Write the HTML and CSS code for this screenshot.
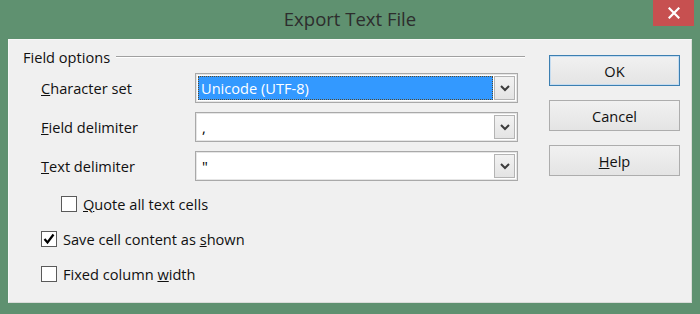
FILE: index.html
```html
<!DOCTYPE html>
<html>
<head>
<meta charset="utf-8">
<link rel="stylesheet" href="styles.css">
</head>
<body>
<div class="window">
  <div class="titlebar">
    <div class="tb-spacer"></div>
    <div class="title">Export Text File</div>
    <div class="tb-controls">
      <div class="close">
        <svg width="12" height="12" viewBox="0 0 12 12"><path d="M1.5 1.5 L10.5 10.5 M10.5 1.5 L1.5 10.5" stroke="#fff" stroke-width="2.2" stroke-linecap="square"/></svg>
      </div>
    </div>
  </div>
  <div class="client">
    <div class="left">
      <div class="section-head">
        <span>Field options</span>
        <div class="rule"></div>
      </div>
      <div class="rows">
        <div class="row">
          <label class="lbl"><u>C</u>haracter set</label>
          <div class="combo">
            <div class="field"><span class="selected">Unicode (UTF-8)</span></div>
            <div class="drop"><svg width="10" height="7" viewBox="0 0 10 7"><polyline points="1,1 5,5 9,1" fill="none" stroke="#3c3c3c" stroke-width="2"/></svg></div>
          </div>
        </div>
        <div class="row">
          <label class="lbl"><u>F</u>ield delimiter</label>
          <div class="combo">
            <div class="field"><span class="val">,</span></div>
            <div class="drop"><svg width="10" height="7" viewBox="0 0 10 7"><polyline points="1,1 5,5 9,1" fill="none" stroke="#3c3c3c" stroke-width="2"/></svg></div>
          </div>
        </div>
        <div class="row">
          <label class="lbl"><u>T</u>ext delimiter</label>
          <div class="combo">
            <div class="field"><span class="val">"</span></div>
            <div class="drop"><svg width="10" height="7" viewBox="0 0 10 7"><polyline points="1,1 5,5 9,1" fill="none" stroke="#3c3c3c" stroke-width="2"/></svg></div>
          </div>
        </div>
      </div>
      <div class="checks">
        <div class="check indent"><span class="box"></span><span><u>Q</u>uote all text cells</span></div>
        <div class="check"><span class="box"><svg width="14" height="14" viewBox="0 0 14 14"><path d="M2.5 7 L5.5 10.5 L11.5 2.5" fill="none" stroke="#000" stroke-width="2.2"/></svg></span><span>Save cell content as <u>s</u>hown</span></div>
        <div class="check"><span class="box"></span><span>Fixed column <u>w</u>idth</span></div>
      </div>
    </div>
    <div class="right">
      <div class="btn default">OK</div>
      <div class="btn">Cancel</div>
      <div class="btn"><span><u>H</u>elp</span></div>
    </div>
  </div>
</div>
</body>
</html>
```
FILE: styles.css
```css
html, body {
  margin: 0;
  padding: 0;
}
body {
  width: 700px;
  height: 314px;
  background: #5f9170;
  font-family: "Open Sans", "Noto Sans", "Liberation Sans", sans-serif;
  font-size: 14.6px;
  color: #000;
  overflow: hidden;
}
.window {
  display: flex;
  flex-direction: column;
}
.titlebar {
  height: 39px;
  display: grid;
  grid-template-columns: 1fr auto 1fr;
}
.title {
  font-size: 18.5px;
  color: #2d2d2d;
  line-height: 39px;
  margin-top: -1px;
}
.tb-controls {
  display: flex;
  justify-content: flex-end;
  align-items: flex-start;
  padding-right: 6px;
}
.close {
  width: 41px;
  height: 26px;
  background: #c75050;
  display: flex;
  align-items: center;
  justify-content: center;
}
.client {
  margin: 0 8px;
  height: 264px;
  box-sizing: border-box;
  background: #f0f0f0;
  border-top: 1px solid #f7f7f7;
  border-left: 1px solid #f7f7f7;
  border-right: 1px solid #d9dcd9;
  border-bottom: 1px solid #d9dcd9;
  display: flex;
  padding: 0 11px 0 14px;
  gap: 24px;
}
.left {
  width: 502px;
  padding-top: 7px;
}
.section-head {
  height: 20px;
  display: flex;
  align-items: center;
  color: #111;
}
.section-head .rule {
  flex: 1;
  margin-left: 6px;
  height: 0;
  border-top: 1px solid #a0a0a0;
  border-bottom: 1px solid #ffffff;
}
.rows {
  margin-top: 6px;
  display: flex;
  flex-direction: column;
  gap: 9px;
}
.row {
  display: flex;
  align-items: center;
  padding-left: 18px;
  height: 30px;
}
.lbl {
  width: 154px;
  color: #111;
}
.combo {
  width: 323px;
  height: 30px;
  box-sizing: border-box;
  border: 1px solid #a9a9a9;
  background: #fff;
  display: flex;
  padding: 2px;
  box-shadow: inset 0 0 0 1px #e6e6e6;
}
.field {
  flex: 1;
  display: flex;
  align-items: center;
}
.selected {
  flex: 1;
  align-self: stretch;
  display: flex;
  align-items: center;
  background: #3399ff;
  color: #fff;
  padding-left: 3px;
  margin: 0 1px 0 0;
  outline: 1px dotted #5a4a2a;
  outline-offset: -1px;
}
.val {
  padding-left: 4px;
  color: #000;
}
.drop {
  width: 21px;
  box-sizing: border-box;
  border: 1px solid #b4b4b4;
  background: linear-gradient(#f2f2f2, #e4e4e4);
  display: flex;
  align-items: center;
  justify-content: center;
}
.checks {
  margin-top: 14px;
  display: flex;
  flex-direction: column;
  gap: 18px;
  padding-left: 18px;
}
.check {
  display: flex;
  align-items: center;
  height: 17px;
  gap: 6px;
  color: #111;
}
.check.indent {
  padding-left: 20px;
}
.box {
  width: 16px;
  height: 16px;
  box-sizing: border-box;
  border: 1px solid #5a5a5a;
  background: #fff;
  display: flex;
  align-items: center;
  justify-content: center;
}
.right {
  width: 131px;
  padding-top: 15px;
  display: flex;
  flex-direction: column;
  gap: 14px;
}
.btn {
  height: 31px;
  box-sizing: border-box;
  border: 1px solid #adadad;
  background: linear-gradient(#f1f1f1, #e4e4e4);
  display: flex;
  align-items: center;
  justify-content: center;
  color: #111;
}
.btn.default {
  border-color: #3c7fb1;
  box-shadow: inset 0 0 0 1px #c5dcf0;
}
```
